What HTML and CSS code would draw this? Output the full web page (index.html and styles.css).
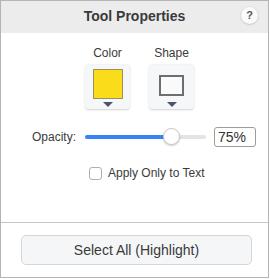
FILE: index.html
```html
<!DOCTYPE html>
<html lang="en">
<head>
    <meta charset="UTF-8">
    <title>Tool Properties</title>
    <link rel="stylesheet" href="styles.css">
</head>
<body>
    <div class="panel">
        <header class="titlebar">
            <h1>Tool Properties</h1>
            <button class="help" aria-label="Help">?</button>
        </header>

        <main class="content">
            <div class="pickers">
                <div class="picker">
                    <span class="picker-label">Color</span>
                    <button class="swatch-btn">
                        <span class="swatch color-swatch"></span>
                        <span class="caret"></span>
                    </button>
                </div>
                <div class="picker">
                    <span class="picker-label">Shape</span>
                    <button class="swatch-btn">
                        <span class="swatch shape-swatch"></span>
                        <span class="caret"></span>
                    </button>
                </div>
            </div>

            <div class="opacity-row">
                <label class="opacity-label">Opacity:</label>
                <div class="slider">
                    <div class="slider-fill" style="width: 72%"></div>
                    <div class="slider-thumb" style="left: 72%"></div>
                </div>
                <div class="value-field">75%</div>
            </div>

            <label class="check-row">
                <span class="checkbox"></span>
                <span>Apply Only to Text</span>
            </label>
        </main>

        <footer class="footer">
            <button class="select-all">Select All (Highlight)</button>
        </footer>
    </div>
</body>
</html>
```

FILE: styles.css
```css
:root {
    --text-color: #333;
    --border-color: #b4b4b4;
    --blue: #3a82f7;
}

* {
    box-sizing: border-box;
    margin: 0;
    padding: 0;
}

body {
    font-family: "Liberation Sans", Arial, sans-serif;
    color: var(--text-color);
    background: #fff;
}

button {
    font-family: inherit;
    color: inherit;
}

.panel {
    width: 269px;
    height: 278px;
    border: 1px solid var(--border-color);
    display: flex;
    flex-direction: column;
    background: #fff;
}

/* title bar */
.titlebar {
    position: relative;
    height: 32px;
    background: #ececed;
    display: flex;
    align-items: center;
    justify-content: center;
}

.titlebar h1 {
    font-size: 14px;
    font-weight: bold;
    color: #3a3a3a;
    margin-top: -2px;
}

.help {
    position: absolute;
    right: 10px;
    top: 6px;
    width: 17px;
    height: 17px;
    border-radius: 50%;
    border: none;
    background: #fbfbfb;
    box-shadow: 0 0.5px 2px rgba(0, 0, 0, 0.25);
    font-size: 11px;
    font-weight: bold;
    color: #555;
    line-height: 17px;
    text-align: center;
}

/* main area */
.content {
    flex: 1;
    padding-top: 13px;
}

.pickers {
    display: flex;
    justify-content: center;
    gap: 19px;
    padding-left: 10px;
}

.picker {
    display: flex;
    flex-direction: column;
    align-items: center;
    gap: 5px;
}

.picker-label {
    font-size: 12px;
    line-height: 14px;
    color: #3a3a3a;
}

.swatch-btn {
    width: 45px;
    height: 44px;
    border: none;
    border-radius: 4px;
    background: #f6f7f9;
    box-shadow: 0 0.5px 2px rgba(0, 0, 0, 0.18);
    display: flex;
    flex-direction: column;
    align-items: center;
    padding-top: 4px;
}

.swatch {
    display: block;
    border: 1.5px solid #888;
}

.color-swatch {
    width: 30px;
    height: 30px;
    background: #fbdc1b;
    border-color: #9a9162;
}

.shape-swatch {
    width: 25px;
    height: 21px;
    margin-top: 6px;
    background: #fafafa;
    border: 2px solid #6e6e6e;
}

.caret {
    margin-top: 3px;
    width: 0;
    height: 0;
    border-left: 5px solid transparent;
    border-right: 5px solid transparent;
    border-top: 5px solid #4b5565;
}

.shape-swatch + .caret {
    margin-top: 6px;
}

/* opacity */
.opacity-row {
    display: flex;
    align-items: center;
    margin-top: 18px;
    padding-left: 31px;
    height: 20px;
}

.opacity-label {
    font-size: 12px;
    width: 43px;
    color: #3a3a3a;
}

.slider {
    position: relative;
    width: 121px;
    height: 4px;
    margin-left: 10px;
    border-radius: 2px;
    background: #e4e4e6;
}

.slider-fill {
    height: 100%;
    border-radius: 2px;
    background: var(--blue);
}

.slider-thumb {
    position: absolute;
    top: -7px;
    width: 17px;
    height: 17px;
    margin-left: -9px;
    border-radius: 50%;
    background: #fff;
    border: 0.5px solid #c8c8c8;
    box-shadow: 0 1px 2px rgba(0, 0, 0, 0.2);
}

.value-field {
    margin-left: 8px;
    width: 42px;
    height: 20px;
    border: 1px solid #9c9c9c;
    border-radius: 3px;
    font-size: 14px;
    line-height: 18px;
    padding-left: 3px;
    color: #333;
}

.check-row {
    display: flex;
    align-items: center;
    gap: 6px;
    margin-top: 19px;
    padding-left: 88px;
    font-size: 12px;
    color: #3a3a3a;
}

.checkbox {
    width: 13px;
    height: 13px;
    border: 1px solid #b0b0b0;
    border-radius: 3px;
    background: #fff;
}

/* footer */
.footer {
    height: 55px;
    border-top: 1px solid #c6c6c6;
    padding: 12px 0 0 20px;
}

.select-all {
    width: 231px;
    height: 30px;
    border: 1px solid #d6d6d8;
    border-radius: 5px;
    background: #f5f6f8;
    font-size: 14px;
    color: #3a3a3a;
}
```
